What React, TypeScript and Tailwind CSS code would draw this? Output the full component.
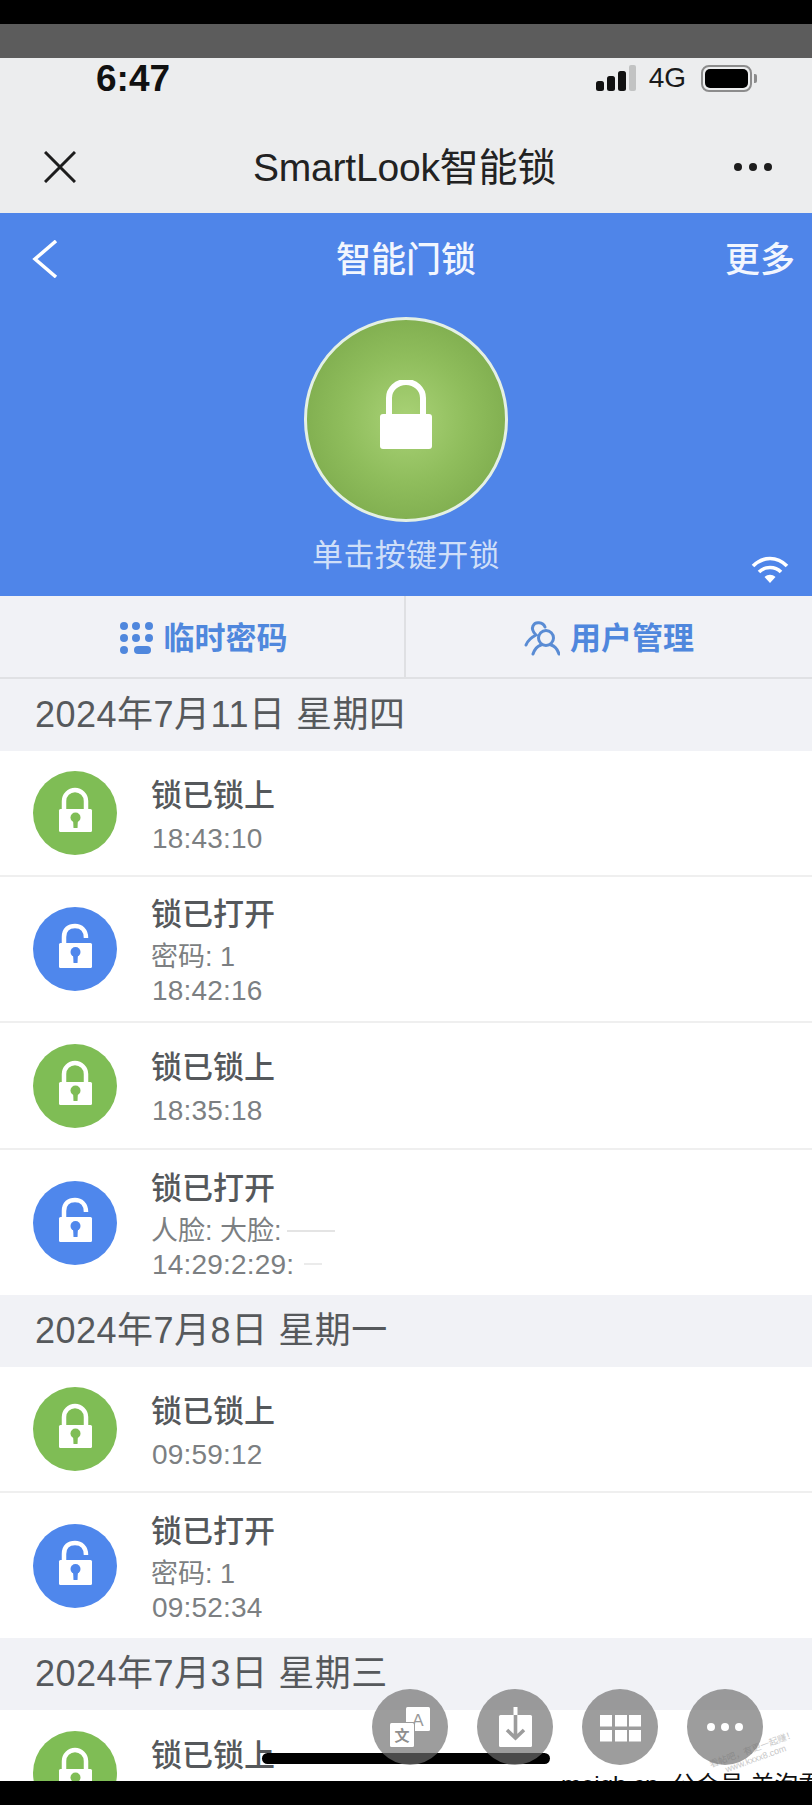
import React from "react";

function SmallLock({ open }: { open: boolean }) {
  const color = open ? "#4f87ec" : "#7fbd55";
  return (
    <div className={open ? "w-[84px] h-[84px] shrink-0 rounded-full bg-[#4f87ec]" : "w-[84px] h-[84px] shrink-0 rounded-full bg-[#7fbd55]"}>
      <svg width="84" height="84" viewBox="0 0 84 84">
        <path
          d={open ? "M31 38 V30 C31 22 36 19 42 19 C48 19 53 23 53 31" : "M31 40 V30 A11 11 0 0 1 53 30 V40"}
          fill="none"
          stroke="#fff"
          strokeWidth="4.5"
        />
        <rect x="26" y={open ? 36 : 38} width="33" height={open ? 25 : 23} rx="1.5" fill="#fff" />
        <circle cx="42.5" cy={open ? 45 : 46.5} r="5" fill={color} />
        <path d={open ? "M40 46 H45 L44.5 56 H40.5 Z" : "M40 47 H45 L44.5 57 H40.5 Z"} fill={color} />
      </svg>
    </div>
  );
}

function Row({
  open,
  title,
  sub,
  time,
  h,
  extra,
}: {
  open: boolean;
  title: string;
  sub?: React.ReactNode;
  time: React.ReactNode;
  h: string;
  extra?: string;
}) {
  return (
    <div className={`${h} ${extra ?? ""} flex items-center pl-[33px] gap-[34px] bg-white shrink-0`}>
      <SmallLock open={open} />
      <div className="mb-[2px]">
        <div className="text-[31px] leading-[52px] text-[#55585b] font-medium">{title}</div>
        {sub ? <div className="text-[27px] leading-[33px] text-[#7c7f82] whitespace-nowrap">{sub}</div> : null}
        <div className="text-[28px] leading-[33px] text-[#7c7f82] tracking-[0.2px] pl-[1px] whitespace-nowrap">{time}</div>
      </div>
    </div>
  );
}

function DateBar({ text }: { text: string }) {
  return (
    <div className="h-[72px] shrink-0 flex items-center pl-[35px] bg-[#f1f2f6] text-[36px] tracking-[0.5px] text-[#56595c] whitespace-nowrap">
      {text}
    </div>
  );
}

export default function App() {
  return (
    <div className="relative w-[812px] h-[1805px] overflow-hidden flex flex-col bg-white font-['Liberation_Sans','Noto_Sans_CJK_SC',sans-serif]">
      <div className="h-[24px] shrink-0 bg-black" />
      <div className="h-[34px] shrink-0 bg-[#5c5c5c]" />

      <div className="h-[40px] shrink-0 bg-[#ecedee] flex items-center justify-between pl-[96px] pr-[55px]">
        <span className="text-[37px] font-bold text-[#111] leading-none">6:47</span>
        <div className="flex items-center">
          <svg width="42" height="28" viewBox="0 0 42 28" className="mr-[12px]">
            <rect x="1" y="17" width="8" height="10" rx="2.5" fill="#111" />
            <rect x="12" y="12" width="8" height="15" rx="2.5" fill="#111" />
            <rect x="23" y="7" width="8" height="20" rx="2.5" fill="#111" />
            <rect x="34" y="1" width="7" height="26" rx="2" fill="#c2c3c3" />
          </svg>
          <span className="text-[28px] leading-none text-[#1a1a1a] mr-[15px]">4G</span>
          <div className="w-[51px] h-[27px] rounded-[8px] border-[2px] border-[#8c8c8c] p-[2px]">
            <div className="w-full h-full rounded-[5px] bg-black" />
          </div>
          <div className="w-[3px] h-[9px] rounded-r-[2px] bg-[#8c8c8c] ml-[2px]" />
        </div>
      </div>

      <div className="h-[115px] shrink-0 bg-[#ecedee] pt-[23px] pl-[44px] pr-[39px] flex items-center justify-between">
        <svg width="32" height="32" viewBox="0 0 32 32" fill="none" stroke="#1d1d1d" strokeWidth="3">
          <path d="M1 1 L31 31 M31 1 L1 31" />
        </svg>
        <div className="text-[39px] leading-none text-[#222] whitespace-nowrap tracking-[-0.2px]">SmartLook智能锁</div>
        <svg width="40" height="10" viewBox="0 0 40 10" fill="#1d1d1d">
          <circle cx="5" cy="5" r="4" />
          <circle cx="20" cy="5" r="4" />
          <circle cx="35" cy="5" r="4" />
        </svg>
      </div>

      <div className="relative h-[383px] shrink-0 bg-[#4f85e9] flex flex-col items-center">
        <div className="w-full h-[92px] grid grid-cols-3 items-center px-[17px]">
          <svg width="26" height="38" viewBox="0 0 26 38" fill="none" stroke="#fff" strokeWidth="3.5" className="ml-[15px]">
            <path d="M24 1 L3 19 L24 37" />
          </svg>
          <div className="text-center text-[35px] leading-none text-[#f2f6fe] font-medium whitespace-nowrap">智能门锁</div>
          <div className="text-right text-[35px] leading-none text-[#f2f6fe] font-medium">更多</div>
        </div>
        <div className="mt-[12px] w-[204px] h-[205px] rounded-full border-[3px] border-[#e4f0e4] bg-[radial-gradient(circle,#a9d276_0%,#8fbd5c_45%,#74a245_100%)] flex items-center justify-center">
          <svg width="54" height="70" viewBox="0 0 54 70" className="mb-[10px]">
            <path d="M10 36 V18 A17 16 0 0 1 44 18 V36" fill="none" stroke="#fff" strokeWidth="6" />
            <rect x="1" y="34" width="52" height="35" rx="3" fill="#fff" />
          </svg>
        </div>
        <div className="mt-[16px] h-[36px] text-[31px] tracking-[0.3px] leading-[36px] text-[#cfdff8] whitespace-nowrap">单击按键开锁</div>
        <svg width="38" height="28" viewBox="0 0 38 28" fill="none" stroke="#fff" strokeWidth="3.6" className="absolute right-[23px] bottom-[12px]">
          <path d="M2 10 C12 0 26 0 36 10" />
          <path d="M8 16 C14 10 24 10 30 16" />
          <path d="M13.5 21 L19 27 L24.5 21 C21 18 17 18 13.5 21 Z" fill="#fff" stroke="none" />
        </svg>
      </div>

      <div className="h-[83px] shrink-0 flex bg-[#f1f2f6] border-b-[2px] border-[#e0e1e4]">
        <div className="w-[406px] border-r-[2px] border-[#dfe0e3] flex items-center justify-center gap-[9px] pl-[2px] pt-[3px]">
          <svg width="36" height="34" viewBox="0 0 36 34" fill="#4f87dd">
            <circle cx="5" cy="5" r="4" />
            <circle cx="17" cy="5" r="4" />
            <circle cx="30" cy="5" r="4" />
            <circle cx="5" cy="17" r="4" />
            <circle cx="17" cy="17" r="4" />
            <circle cx="30" cy="17" r="4" />
            <circle cx="5" cy="29" r="4" />
            <rect x="15" y="25" width="17" height="8" rx="4" />
          </svg>
          <span className="text-[31px] leading-none font-bold text-[#4f87dd] whitespace-nowrap">临时密码</span>
        </div>
        <div className="flex-1 flex items-center justify-center gap-[10px] pt-[3px]">
          <svg width="36" height="36" viewBox="0 0 36 36" fill="none" stroke="#5a8cd4" strokeWidth="3" strokeLinecap="round">
            <circle cx="22" cy="18" r="7.5" />
            <path d="M9 34 C11 28 14 26 17 25 M35 34 C33 28 31 26 27 25" />
            <path d="M21 7 C19 2 11 1 9 6 C7 10 10 13 12 15 C8 17 4 20 2 25" />
          </svg>
          <span className="text-[31px] leading-none font-bold text-[#4f87dd] whitespace-nowrap">用户管理</span>
        </div>
      </div>

      <div className="flex-1 min-h-0 overflow-hidden flex flex-col">
        <DateBar text="2024年7月11日 星期四" />
        <Row open={false} title="锁已锁上" time="18:43:10" h="h-[126px]" extra="border-b-[2px] border-[#efefef]" />
        <Row open title="锁已打开" sub="密码: 1" time="18:42:16" h="h-[146px]" extra="border-b-[2px] border-[#efefef]" />
        <Row open={false} title="锁已锁上" time="18:35:18" h="h-[127px]" extra="border-b-[2px] border-[#efefef]" />
        <Row
          open
          title="锁已打开"
          sub={
            <span className="inline-flex items-center">
              人脸: 大脸:
              <span className="inline-block w-[48px] h-[2px] ml-[5px] bg-[#e4e4e4]" />
            </span>
          }
          time={
            <span className="inline-flex items-center">
              14:29:2:29:
              <span className="inline-block w-[18px] h-[2px] ml-[10px] bg-[#ebebeb]" />
            </span>
          }
          h="h-[145px]"
        />
        <DateBar text="2024年7月8日 星期一" />
        <Row open={false} title="锁已锁上" time="09:59:12" h="h-[126px]" extra="border-b-[2px] border-[#efefef]" />
        <Row open title="锁已打开" sub="密码: 1" time="09:52:34" h="h-[145px]" />
        <DateBar text="2024年7月3日 星期三" />
        <div className="flex items-start pl-[33px] gap-[34px] pt-[21px] bg-white shrink-0">
          <SmallLock open={false} />
          <div className="text-[31px] leading-[52px] text-[#55585b] font-medium -mt-[1px]">锁已锁上</div>
        </div>
      </div>
      <div className="h-[24px] shrink-0 bg-black z-10" />

      <div className="absolute left-[262px] top-[1753px] w-[288px] h-[11px] rounded-full bg-black" />

      <div className="absolute left-[561px] top-[1771px] text-[24px] leading-[28px] text-[#111] whitespace-pre">meiqh.cn  公众号 羊泡君</div>
      <div className="absolute left-[709px] top-[1744px] -rotate-[20deg] text-[9px] leading-[10px] text-[#c8c8c8] whitespace-nowrap text-center">
        看帖吧，有更一起赚！
        <br />
        www.kxxx8.com
      </div>

      <div className="absolute left-[372px] top-[1689px] flex gap-[29px]">
        <div className="w-[76px] h-[76px] rounded-full bg-[rgba(110,110,110,0.68)]">
          <svg width="76" height="76" viewBox="0 0 76 76">
            <rect x="34" y="18" width="24" height="24" rx="1.5" fill="#fff" />
            <text x="46" y="37" textAnchor="middle" fontSize="17" fill="#9a9a9a" fontFamily="Liberation Sans">A</text>
            <rect x="17" y="33" width="26" height="26" rx="1.5" fill="#9c9c9c" />
            <rect x="18" y="34" width="24" height="24" rx="1.5" fill="#fff" />
            <text x="30" y="52" textAnchor="middle" fontSize="15" fontWeight="bold" fill="#8f8f8f" fontFamily="Noto Sans CJK SC">文</text>
          </svg>
        </div>
        <div className="w-[76px] h-[76px] rounded-full bg-[rgba(110,110,110,0.68)]">
          <svg width="76" height="76" viewBox="0 0 76 76">
            <rect x="22" y="26" width="33" height="32" rx="1.5" fill="#fff" />
            <path d="M38.5 18 V26" stroke="#fff" strokeWidth="4" />
            <path d="M38.5 26 V48 M30 41 L38.5 49 L47 41" stroke="#9c9c9c" strokeWidth="3.6" fill="none" />
          </svg>
        </div>
        <div className="w-[76px] h-[76px] rounded-full bg-[rgba(110,110,110,0.68)]">
          <svg width="76" height="76" viewBox="0 0 76 76" fill="#fff">
            <rect x="18" y="26" width="12" height="11.5" />
            <rect x="33" y="26" width="12" height="11.5" />
            <rect x="47" y="26" width="12" height="11.5" />
            <rect x="18" y="41" width="12" height="11.5" />
            <rect x="33" y="41" width="12" height="11.5" />
            <rect x="47" y="41" width="12" height="11.5" />
          </svg>
        </div>
        <div className="w-[76px] h-[76px] rounded-full bg-[rgba(110,110,110,0.68)]">
          <svg width="76" height="76" viewBox="0 0 76 76" fill="#fff">
            <circle cx="24" cy="38" r="4" />
            <circle cx="38" cy="38" r="4" />
            <circle cx="52" cy="38" r="4" />
          </svg>
        </div>
      </div>
    </div>
  );
}
